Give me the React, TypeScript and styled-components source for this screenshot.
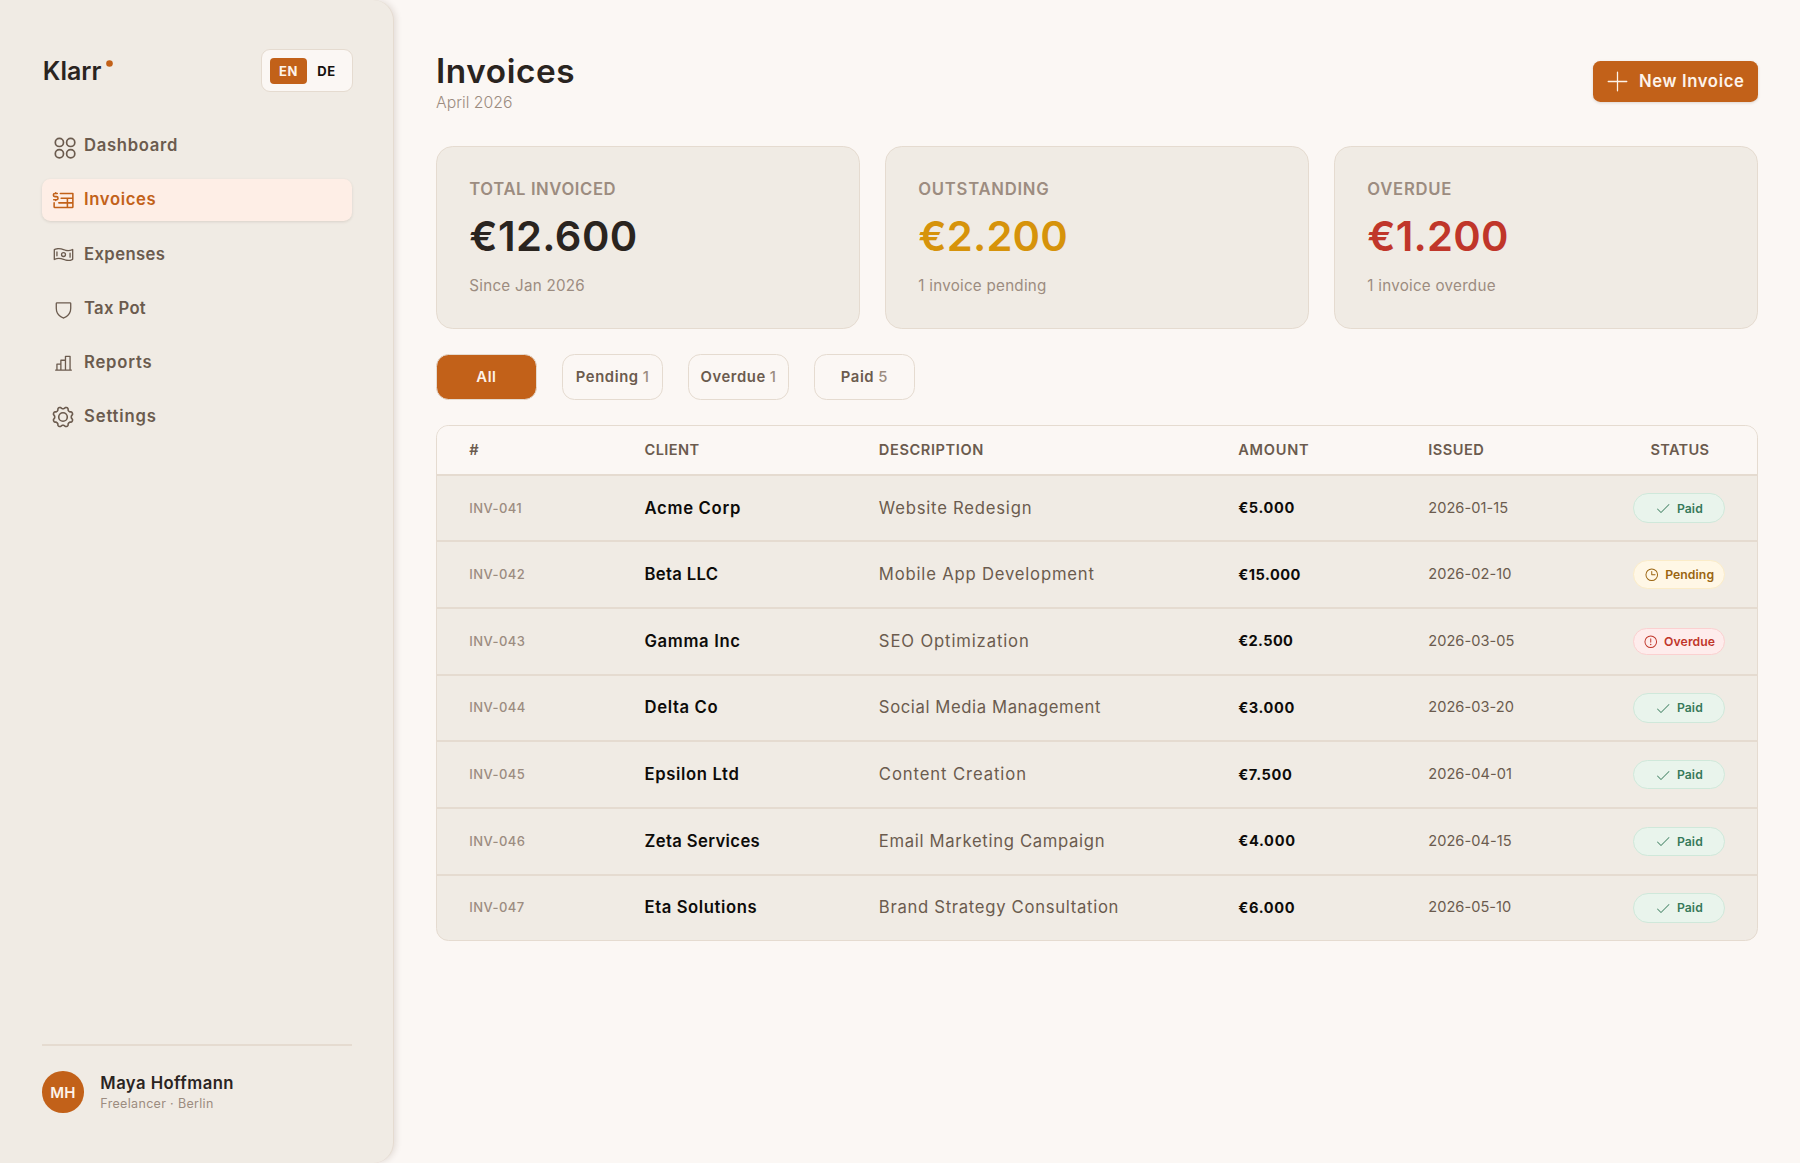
import React from "react";
import styled, { createGlobalStyle, css } from "styled-components";
import {
  PiInvoice,
  PiMoneyWavy,
  PiShield,
  PiChartBar,
  PiPlusLight,
  PiCheckLight,
  PiClock,
  PiWarningCircle,
} from "react-icons/pi";

/* The design grid is 1728 units wide; u() scales it to the 1800px page. */
const u = (n: number) => `${Math.round(n * (1800 / 1728) * 1000) / 1000}px`;

const color = {
  page: "#fbf7f4",
  panel: "#f0ebe4",
  line: "#e5dbd0",
  accent: "#c26119",
  accentSoft: "#feeee6",
  ink: "#2a241f",
  brown: "#6b5b4e",
  muted: "#9c8c80",
  amber: "#d6930b",
  red: "#c0362a",
};

const GlobalStyle = createGlobalStyle`
  *, *::before, *::after { box-sizing: border-box; }
  html, body { margin: 0; padding: 0; background: ${color.page}; }
  body { font-family: Inter, "Open Sans", sans-serif; color: ${color.ink}; overflow: hidden; }
  button { font: inherit; border: 0; padding: 0; margin: 0; background: none; color: inherit; }
  svg { display: block; flex: none; }
`;

const Shell = styled.div`
  display: flex;
  width: 1800px;
  height: 1163px;
  background: ${color.page};
`;

const Sidebar = styled.aside`
  display: flex;
  flex-direction: column;
  width: 394px;
  flex: none;
  padding: 49px 41px 50px 42px;
  background: ${color.panel};
  border-right: 1px solid ${color.line};
  border-radius: 0 ${u(20)} ${u(20)} 0;
  box-shadow: 2px 0 6px rgba(60, 40, 20, 0.13);
`;

const Brand = styled.div`
  display: flex;
  align-items: center;
  justify-content: space-between;
  height: ${u(42)};
  margin-right: -1px;
  padding-left: 0.8px;
`;

const Logo = styled.div`
  display: flex;
  align-items: flex-start;
  gap: 5px;
  font-size: 25px;
  line-height: 30px;
  font-weight: 600;
`;

const LogoDot = styled.svg`
  width: 7px;
  height: 7px;
  margin-top: 4.5px;
  fill: ${color.accent};
`;

const LangSwitch = styled.div`
  display: flex;
  align-items: center;
  width: 92px;
  height: 43px;
  padding-left: 8px;
  background: ${color.page};
  border: 1px solid ${color.line};
  border-radius: 9px;
`;

const LangButton = styled.button<{ $active?: boolean }>`
  && {
    width: 37px;
    height: 25.5px;
    padding-left: ${(p) => (p.$active ? 0 : 2)}px;
    border-radius: 4px;
    font-size: 13px;
    font-weight: 700;
    letter-spacing: 0.7px;
    color: ${(p) => (p.$active ? "#fdf3ea" : "#15110e")};
    background: ${(p) => (p.$active ? color.accent : "transparent")};
  }
`;

const Nav = styled.nav`
  display: flex;
  flex-direction: column;
  gap: ${u(12)};
  margin-top: 32.5px;
`;

const NavItem = styled.a<{ $active?: boolean }>`
  display: flex;
  align-items: center;
  height: ${u(40)};
  padding-left: 8px;
  border-radius: ${u(8)};
  font-size: 16.67px;
  font-weight: 600;
  color: ${color.brown};
  ${(p) =>
    p.$active &&
    css`
      color: ${color.accent};
      background: ${color.accentSoft};
      box-shadow: 0 1px 3px rgba(60, 40, 20, 0.13);
    `}
`;

const NavIcon = styled.span`
  display: flex;
  align-items: center;
  justify-content: center;
  width: 26px;
  height: 26px;
  margin: 1px 8px 0 0;
`;

const Tracked = styled.span<{ $track: number }>`
  letter-spacing: ${(p) => p.$track}px;
`;

const NavLabel = styled(Tracked)`
  padding-bottom: 1.6px;
`;

const Profile = styled.div`
  display: flex;
  align-items: center;
  gap: ${u(16)};
  margin-top: auto;
  padding-top: 25px;
  border-top: 2px solid ${color.line};
`;

const Avatar = styled.div`
  display: flex;
  align-items: center;
  justify-content: center;
  width: ${u(40)};
  height: ${u(40)};
  border-radius: 50%;
  background: ${color.accent};
  color: #fdf3ea;
  font-size: 15px;
  font-weight: 600;
`;

const ProfileName = styled.div`
  font-size: 16.67px;
  line-height: 24px;
  font-weight: 600;
  letter-spacing: 0.45px;
`;

const ProfileRole = styled.div`
  font-size: 12.5px;
  line-height: 18px;
  letter-spacing: 0.33px;
  color: ${color.muted};
`;

const Main = styled.main`
  display: flex;
  flex-direction: column;
  gap: ${u(24)};
  flex: 1;
  min-width: 0;
  padding: ${u(48)} 42px;
`;

const PageHeader = styled.header`
  display: flex;
  align-items: flex-start;
  justify-content: space-between;
  height: ${u(68)};
`;

const Title = styled.h1`
  margin: 0;
  font-size: 33.33px;
  line-height: 42px;
  font-weight: 600;
  letter-spacing: 0.6px;
`;

const Period = styled.div`
  font-size: 15.8px;
  line-height: 21px;
  font-weight: 300;
  color: ${color.muted};
`;

const PrimaryButton = styled.button`
  && {
    display: flex;
    align-items: center;
    gap: 8px;
    width: ${u(158.5)};
    height: ${u(40)};
    margin-top: 10.6px;
    padding-left: 11px;
    border-radius: ${u(7)};
    background: ${color.accent};
    color: #fdf3ea;
    font-size: 16.67px;
    font-weight: 600;
    letter-spacing: 0.65px;
    white-space: nowrap;
    box-shadow: 0 1px 3px rgba(60, 40, 20, 0.16);
  }
`;

const ButtonLabel = styled.span`
  padding-bottom: 1.5px;
`;

const Cards = styled.section`
  display: grid;
  grid-template-columns: repeat(3, 1fr);
  gap: ${u(24)};
`;

const Card = styled.article`
  height: ${u(176)};
  padding: 30px ${u(31)} 0;
  background: ${color.panel};
  border: 1px solid ${color.line};
  border-radius: ${u(16)};
`;

const CardLabel = styled.div<{ $track: number }>`
  font-size: 16.67px;
  line-height: 24px;
  font-weight: 600;
  letter-spacing: ${(p) => p.$track}px;
  color: ${color.muted};
`;

const CardValue = styled.div<{ $color: string; $track: number }>`
  margin-top: 9px;
  font-size: 41.67px;
  line-height: 52px;
  font-weight: 600;
  letter-spacing: ${(p) => p.$track}px;
  color: ${(p) => p.$color};
`;

const CardNote = styled.div`
  margin-top: 14px;
  font-size: 15.2px;
  line-height: 20px;
  letter-spacing: 0.25px;
  color: ${color.muted};
`;

const Filters = styled.div`
  display: flex;
  gap: ${u(24)};
`;

const FilterButton = styled.button<{ $active?: boolean }>`
  && {
    display: flex;
    align-items: center;
    justify-content: center;
    gap: 4px;
    width: ${u(96.85)};
    height: ${u(44)};
    border: 1px solid ${color.line};
    border-radius: ${u(12)};
    font-size: 14.8px;
    font-weight: 600;
    letter-spacing: 0.6px;
    color: ${(p) => (p.$active ? "#fdf3ea" : color.brown)};
    background: ${(p) => (p.$active ? color.accent : color.page)};
  }
`;

const FilterCount = styled.span`
  font-weight: 500;
  letter-spacing: 0;
  color: ${color.muted};
`;

const Table = styled.section`
  border: 1px solid ${color.line};
  border-radius: ${u(12)};
  overflow: hidden;
  background: ${color.panel};
`;

const rowGrid = css`
  display: grid;
  grid-template-columns: ${u(168.2)} ${u(225)} ${u(345)} ${u(182.4)} 1fr ${u(88)};
  align-items: center;
  padding: 0 ${u(31)};
  border-bottom: 2px solid ${color.line};
`;

const HeadRow = styled.div`
  ${rowGrid}
  height: ${u(47.7)};
  background: ${color.page};
  font-size: 14.58px;
  font-weight: 600;
  color: ${color.brown};
`;

const HeadCell = styled(Tracked)<{ $center?: boolean }>`
  text-align: ${(p) => (p.$center ? "center" : "left")};
  padding-left: ${(p) => (p.$center ? 2 : 0)}px;
`;

const Row = styled.div`
  ${rowGrid}
  height: ${u(64)};
  &:last-child {
    height: ${u(62)};
    border-bottom: 0;
  }
`;

const NumberCell = styled.span`
  padding-bottom: 1px;
  font-size: 13px;
  font-weight: 500;
  letter-spacing: 0.42px;
  color: ${color.muted};
`;

const ClientCell = styled(Tracked)`
  padding-bottom: 1px;
  font-size: 16.67px;
  font-weight: 600;
  color: #0d0b09;
`;

const TextCell = styled(Tracked)`
  padding-bottom: 1px;
  font-size: 16.67px;
  color: ${color.brown};
`;

const AmountCell = styled(Tracked)`
  font-size: 14.58px;
  font-weight: 700;
  color: #0d0b09;
`;

const DateCell = styled.span`
  padding-bottom: 1px;
  font-size: 14.58px;
  letter-spacing: 0.05px;
  color: ${color.brown};
`;

type Status = "Paid" | "Pending" | "Overdue";

const pillTone = {
  Paid: { fg: "#36795a", bg: "#e9f4ec", line: "#cfe8da", height: 29.5 },
  Pending: { fg: "#9a6410", bg: "#fff7e6", line: "#fbecc8", height: 28.5 },
  Overdue: { fg: "#c0362a", bg: "#feecec", line: "#fbd0d0", height: 27.5 },
};

const Pill = styled.span<{ $status: Status }>`
  display: flex;
  align-items: center;
  justify-content: center;
  gap: 6px;
  height: ${(p) => pillTone[p.$status].height}px;
  border: 1px solid ${(p) => pillTone[p.$status].line};
  border-radius: 15px;
  background: ${(p) => pillTone[p.$status].bg};
  color: ${(p) => pillTone[p.$status].fg};
  font-size: 12.2px;
  font-weight: 600;
  letter-spacing: 0.1px;
`;

const CirclesIcon = styled.svg`
  width: 22px;
  height: 22px;
  margin: 2px -4px 0 0;
`;

const DashboardIcon = () => (
  <CirclesIcon viewBox="0 0 22 22" fill="none" stroke="currentColor" strokeWidth="1.7">
    <circle cx="5.4" cy="5.4" r="4.1" />
    <circle cx="16.7" cy="5.4" r="4.1" />
    <circle cx="5.4" cy="16.7" r="4.1" />
    <circle cx="16.7" cy="16.7" r="4.1" />
  </CirclesIcon>
);

/* Outline of an eight-lobed cog, sampled every three degrees. */
const cogPath =
  Array.from({ length: 120 }, (_, i) => {
    const a = (i * 3 * Math.PI) / 180;
    const r = 9.2 + 0.95 * Math.tanh(1.8 * Math.cos(8 * (a - Math.PI / 8)));
    return `${i ? "L" : "M"}${(11 + r * Math.cos(a)).toFixed(2)} ${(11 + r * Math.sin(a)).toFixed(2)}`;
  }).join("") + "Z";

const CogIcon = () => (
  <svg width="22" height="22" viewBox="0 0 22 22" fill="none" stroke="currentColor" strokeWidth="1.6" strokeLinejoin="round">
    <path d={cogPath} />
    <circle cx="11" cy="11" r="4.3" />
  </svg>
);

const navItems = [
  { label: "Dashboard", icon: <DashboardIcon />, track: 0.7 },
  { label: "Invoices", icon: <PiInvoice size={25} />, track: 0.65, active: true },
  { label: "Expenses", icon: <PiMoneyWavy size={21} />, track: 0.4 },
  { label: "Tax Pot", icon: <PiShield size={21} />, track: 0.35 },
  { label: "Reports", icon: <PiChartBar size={21} />, track: 0.8 },
  { label: "Settings", icon: <CogIcon />, track: 0.85 },
];

const cards = [
  { label: "TOTAL INVOICED", value: "€12.600", note: "Since Jan 2026", color: color.ink, labelTrack: 0.6, track: 0.4 },
  { label: "OUTSTANDING", value: "€2.200", note: "1 invoice pending", color: color.amber, labelTrack: 0.75, track: 0.2 },
  { label: "OVERDUE", value: "€1.200", note: "1 invoice overdue", color: color.red, labelTrack: 0.75, track: 0.2 },
];

const filters = [
  { label: "All", active: true },
  { label: "Pending", count: 1 },
  { label: "Overdue", count: 1 },
  { label: "Paid", count: 5 },
];

/* [text, letter spacing] */
type Spaced = [string, number];

const headings: Spaced[] = [
  ["#", 0],
  ["CLIENT", 0.4],
  ["DESCRIPTION", 0.6],
  ["AMOUNT", 0.75],
  ["ISSUED", 0.5],
  ["STATUS", 0.3],
];

const invoices: { id: string; client: Spaced; text: Spaced; amount: Spaced; date: string; status: Status }[] = [
  { id: "INV-041", client: ["Acme Corp", 0.7], text: ["Website Redesign", 0.78], amount: ["€5.000", 0.65], date: "2026-01-15", status: "Paid" },
  { id: "INV-042", client: ["Beta LLC", 0.35], text: ["Mobile App Development", 0.8], amount: ["€15.000", 0.5], date: "2026-02-10", status: "Pending" },
  { id: "INV-043", client: ["Gamma Inc", 0.65], text: ["SEO Optimization", 0.86], amount: ["€2.500", 0.35], date: "2026-03-05", status: "Overdue" },
  { id: "INV-044", client: ["Delta Co", 0.65], text: ["Social Media Management", 0.6], amount: ["€3.000", 0.6], date: "2026-03-20", status: "Paid" },
  { id: "INV-045", client: ["Epsilon Ltd", 0.63], text: ["Content Creation", 0.9], amount: ["€7.500", 0.65], date: "2026-04-01", status: "Paid" },
  { id: "INV-046", client: ["Zeta Services", 0.37], text: ["Email Marketing Campaign", 0.67], amount: ["€4.000", 0.7], date: "2026-04-15", status: "Paid" },
  { id: "INV-047", client: ["Eta Solutions", 0.6], text: ["Brand Strategy Consultation", 0.7], amount: ["€6.000", 0.7], date: "2026-05-10", status: "Paid" },
];

const statusIcon = {
  Paid: <PiCheckLight size={16} />,
  Pending: <PiClock size={15.5} />,
  Overdue: <PiWarningCircle size={15.5} />,
};

export default function App() {
  return (
    <>
      <GlobalStyle />
      <Shell>
        <Sidebar>
          <Brand>
            <Logo>
              Klarr
              <LogoDot viewBox="0 0 7 7">
                <circle cx="3.5" cy="3.5" r="3.3" />
              </LogoDot>
            </Logo>
            <LangSwitch>
              <LangButton $active>EN</LangButton>
              <LangButton>DE</LangButton>
            </LangSwitch>
          </Brand>
          <Nav>
            {navItems.map((n) => (
              <NavItem key={n.label} $active={n.active}>
                <NavIcon>{n.icon}</NavIcon>
                <NavLabel $track={n.track}>{n.label}</NavLabel>
              </NavItem>
            ))}
          </Nav>
          <Profile>
            <Avatar>MH</Avatar>
            <div>
              <ProfileName>Maya Hoffmann</ProfileName>
              <ProfileRole>Freelancer · Berlin</ProfileRole>
            </div>
          </Profile>
        </Sidebar>
        <Main>
          <PageHeader>
            <div>
              <Title>Invoices</Title>
              <Period>April 2026</Period>
            </div>
            <PrimaryButton>
              <PiPlusLight size={27} />
              <ButtonLabel>New Invoice</ButtonLabel>
            </PrimaryButton>
          </PageHeader>
          <Cards>
            {cards.map((c) => (
              <Card key={c.label}>
                <CardLabel $track={c.labelTrack}>{c.label}</CardLabel>
                <CardValue $color={c.color} $track={c.track}>
                  {c.value}
                </CardValue>
                <CardNote>{c.note}</CardNote>
              </Card>
            ))}
          </Cards>
          <Filters>
            {filters.map((f) => (
              <FilterButton key={f.label} $active={f.active}>
                {f.label}
                {f.count !== undefined && <FilterCount>{f.count}</FilterCount>}
              </FilterButton>
            ))}
          </Filters>
          <Table>
            <HeadRow>
              {headings.map(([label, track]) => (
                <HeadCell key={label} $track={track} $center={label === "STATUS"}>
                  {label}
                </HeadCell>
              ))}
            </HeadRow>
            {invoices.map((i) => (
              <Row key={i.id}>
                <NumberCell>{i.id}</NumberCell>
                <ClientCell $track={i.client[1]}>{i.client[0]}</ClientCell>
                <TextCell $track={i.text[1]}>{i.text[0]}</TextCell>
                <AmountCell $track={i.amount[1]}>{i.amount[0]}</AmountCell>
                <DateCell>{i.date}</DateCell>
                <Pill $status={i.status}>
                  {statusIcon[i.status]}
                  {i.status}
                </Pill>
              </Row>
            ))}
          </Table>
        </Main>
      </Shell>
    </>
  );
}
